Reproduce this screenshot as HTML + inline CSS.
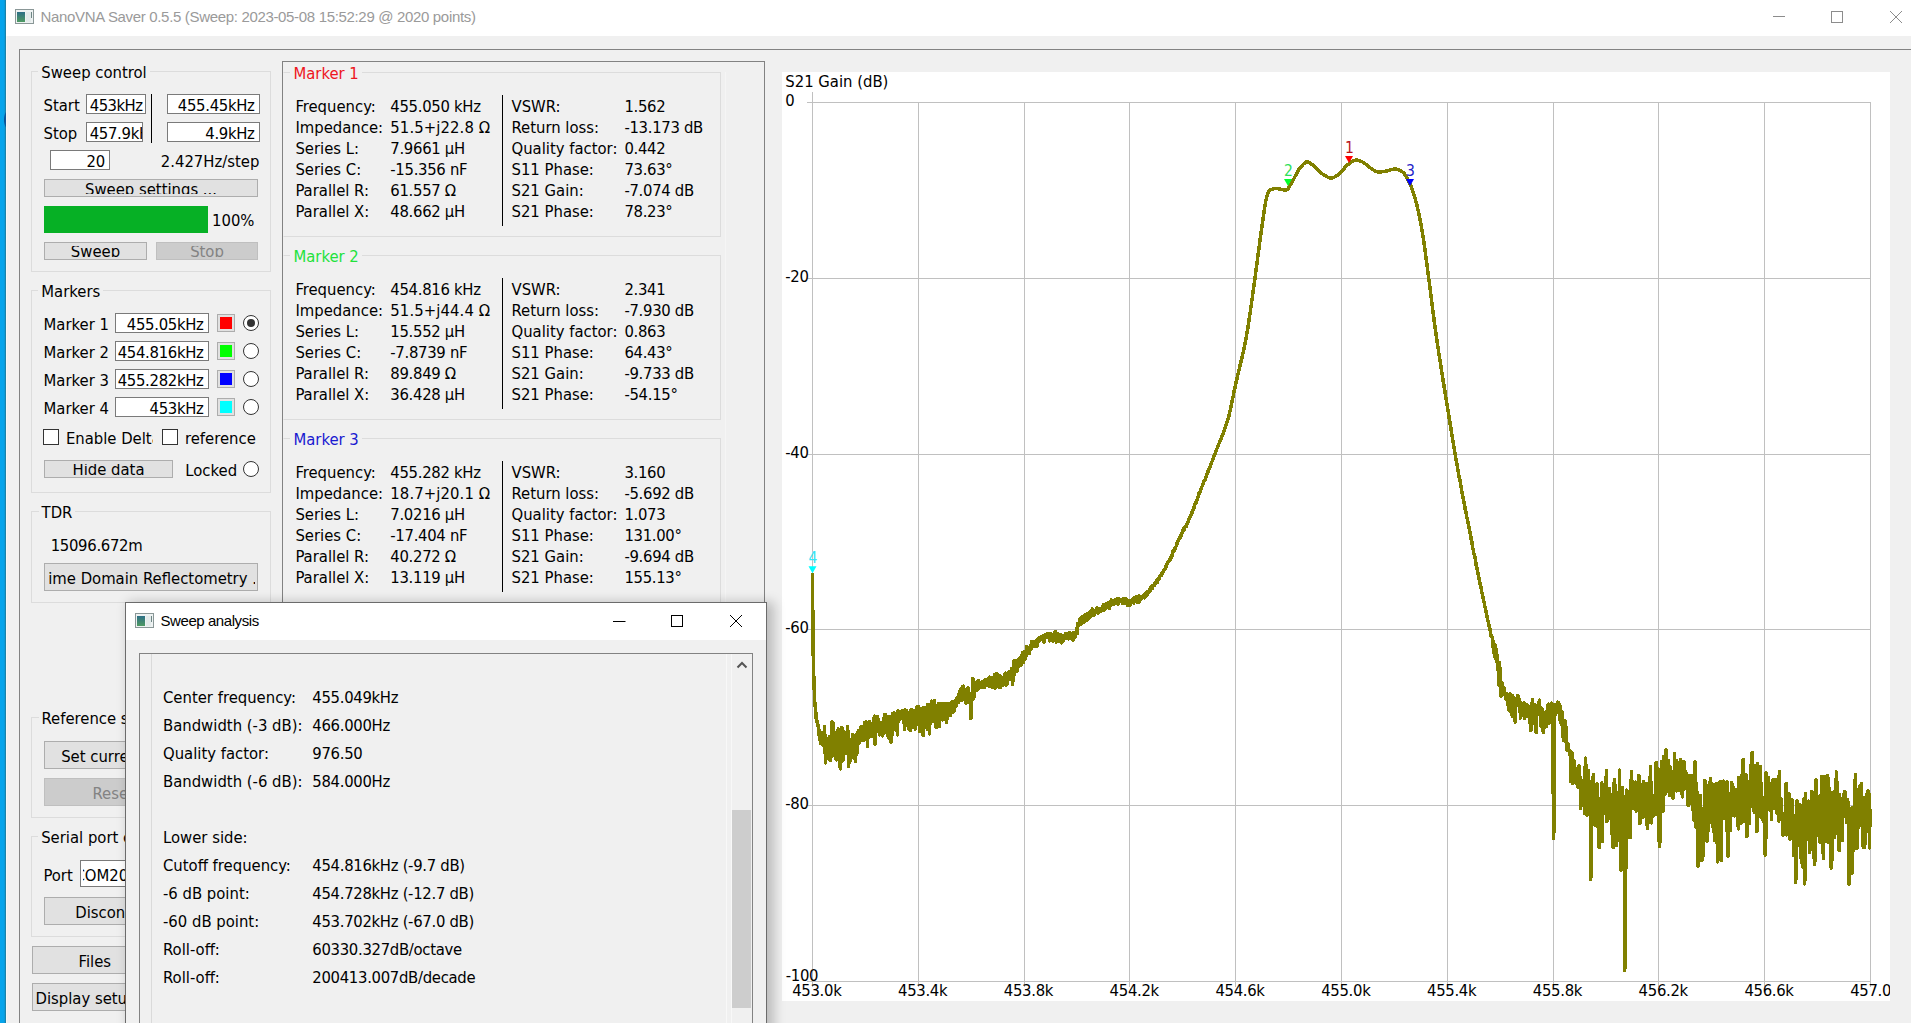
<!DOCTYPE html>
<html lang="en">
<head>
<meta charset="utf-8">
<title>NanoVNA Saver 0.5.5</title>
<style>
html,body{margin:0;padding:0;}
body{width:1911px;height:1023px;overflow:hidden;position:relative;background:#f0f0f0;
 font-family:"DejaVu Sans Condensed","DejaVu Sans","Liberation Sans",sans-serif;font-size:16.5px;font-stretch:condensed;color:#000;}
div{position:absolute;box-sizing:border-box;}
.t{white-space:nowrap;line-height:20px;height:20px;}
.n{letter-spacing:-0.3px;}
.w{letter-spacing:0.1px;}
.seg{font-family:"Liberation Sans",sans-serif;letter-spacing:-0.33px;}
.grp{border:1px solid #dcdcdc;}
.gt{background:#f0f0f0;padding:0 3px;}
.inp{background:#fff;border:1px solid #7a7a7a;overflow:hidden;}
.btn{background:#e1e1e1;border:1px solid #adadad;overflow:hidden;}
.btn.dis{background:#cccccc;border-color:#bfbfbf;color:#838383;}
.btn .t{left:0;right:0;text-align:center;}
.clip{left:0;right:0;top:3px;bottom:2px;overflow:hidden;}
.rad{width:16px;height:16px;border-radius:50%;border:1px solid #333;background:#fff;}
.rad.on:after{content:"";position:absolute;left:3px;top:3px;width:8px;height:8px;border-radius:50%;background:#333;}
.chk{width:16px;height:16px;border:1px solid #333;background:#fff;}
.cb{background:#e1e1e1;border:1px solid #adadad;}
.cb div{left:2px;top:2px;width:12px;height:12px;}
.vl{width:1px;background:#000;}
svg{position:absolute;overflow:visible;}
</style>
</head>
<body>
<div class="" style="left:0px;top:0px;width:6px;height:1023px;background:linear-gradient(90deg,#05a4ec 0,#05a4ec 55%,#0c98d6 80%,#1a82a8 92%,#1a82a8 100%);"></div>
<div class="" style="left:6px;top:0px;width:1px;height:1023px;background:#f3f8fa;"></div>
<svg style="left:0;top:108px" width="7" height="24" viewBox="0 0 7 24"><path d="M5.9 4C3.4 8.5 3.4 15 5.9 19.5Z" fill="#0a4f94"/></svg>
<div class="" style="left:6px;top:0px;width:1905px;height:36px;background:#fff;"></div>
<svg style="left:15px;top:9px" width="19" height="15" viewBox="0 0 19 15"><defs><linearGradient id="ig15" x1="0" y1="0" x2="0" y2="1"><stop offset="0" stop-color="#2d6f86"/><stop offset="1" stop-color="#4f9a62"/></linearGradient></defs><rect x="0.5" y="0.5" width="18" height="14" fill="#eef2f2" stroke="#8a9797"/><rect x="2" y="3" width="8" height="10" fill="url(#ig15)"/><rect x="11" y="3" width="5" height="10" fill="#e3eaea"/><rect x="16" y="3" width="1" height="6" fill="#6d8584"/></svg>
<div class="t seg" style="left:40.5px;top:7.3px;font-size:15.0px;color:#9a9a9a;">NanoVNA Saver 0.5.5 (Sweep: 2023-05-08 15:52:29 @ 2020 points)</div>
<svg style="left:1760px;top:0" width="151" height="36" viewBox="0 0 151 36" fill="none" stroke="#8c8c8c" stroke-width="1"><path d="M13 16.5H25"/><rect x="71.5" y="11.5" width="11" height="11"/><path d="M130 11L142 23M142 11L130 23"/></svg>
<div class="" style="left:19px;top:49px;width:1900px;height:990px;border-left:1px solid #828282;border-top:1px solid #828282;"></div>
<div class="grp" style="left:31px;top:71px;width:240px;height:201px;"></div>
<div class="t gt" style="left:38.3px;top:63.1px;">Sweep control</div>
<div class="t" style="left:43.5px;top:95.6px;">Start</div>
<div class="inp" style="left:86px;top:94px;width:60px;height:20px;"><div class="t n" style="left:2.7px;top:0.6px;letter-spacing:-0.5px;">453kHz</div>
</div>
<div class="vl" style="left:151px;top:94px;width:1px;height:49px;"></div>
<div class="inp" style="left:167px;top:94px;width:93px;height:20px;"><div class="t n" style="right:4.4px;top:0.6px">455.45kHz</div></div>
<div class="t" style="left:43.5px;top:123.9px;">Stop</div>
<div class="inp" style="left:86px;top:122px;width:57px;height:20px;"><div class="t n" style="left:2.7px;top:0.9px;width:52.3px;overflow:hidden;">457.9kHz</div>
</div>
<div class="inp" style="left:167px;top:122px;width:93px;height:20px;"><div class="t n" style="right:4.4px;top:0.9px">4.9kHz</div></div>
<div class="inp" style="left:50px;top:150px;width:60px;height:20px;"><div class="t n" style="right:4.2px;top:0.8px">20</div></div>
<div class="t" style="left:160.8px;top:151.8px;">2.427Hz/step</div>
<div class="btn" style="left:44px;top:179px;width:214px;height:18px;"><div class="clip"><div class="t" style="top:-3.4px">Sweep settings ...</div></div></div>
<div class="" style="left:44px;top:206px;width:164px;height:27px;background:#06b025;"></div>
<div class="t" style="left:212.0px;top:210.9px;">100%</div>
<div class="btn" style="left:44px;top:242px;width:103px;height:18px;"><div class="clip"><div class="t" style="top:-3.6px">Sweep</div></div></div>
<div class="btn dis" style="left:156px;top:242px;width:102px;height:18px;"><div class="clip"><div class="t" style="top:-3.6px">Stop</div></div></div>
<div class="grp" style="left:31px;top:290px;width:240px;height:203px;"></div>
<div class="t gt" style="left:38.3px;top:282.1px;">Markers</div>
<div class="t" style="left:43.5px;top:315.0px;">Marker 1</div>
<div class="inp" style="left:115px;top:313px;width:94px;height:20px;"><div class="t n" style="right:4.4px;top:1.0px">455.05kHz</div></div>
<div class="cb" style="left:217px;top:314px;width:18px;height:18px;"><div style="background:#ff0000"></div></div>
<div class="rad on" style="left:243px;top:315px"></div>
<div class="t" style="left:43.5px;top:343.0px;">Marker 2</div>
<div class="inp" style="left:115px;top:341px;width:94px;height:20px;"><div class="t n" style="right:4.4px;top:1.0px">454.816kHz</div></div>
<div class="cb" style="left:217px;top:342px;width:18px;height:18px;"><div style="background:#00ff00"></div></div>
<div class="rad" style="left:243px;top:343px"></div>
<div class="t" style="left:43.5px;top:371.0px;">Marker 3</div>
<div class="inp" style="left:115px;top:369px;width:94px;height:20px;"><div class="t n" style="right:4.4px;top:1.0px">455.282kHz</div></div>
<div class="cb" style="left:217px;top:370px;width:18px;height:18px;"><div style="background:#0000ff"></div></div>
<div class="rad" style="left:243px;top:371px"></div>
<div class="t" style="left:43.5px;top:399.0px;">Marker 4</div>
<div class="inp" style="left:115px;top:397px;width:94px;height:20px;"><div class="t n" style="right:4.4px;top:1.0px">453kHz</div></div>
<div class="cb" style="left:217px;top:398px;width:18px;height:18px;"><div style="background:#00ffff"></div></div>
<div class="rad" style="left:243px;top:399px"></div>
<div class="chk" style="left:43px;top:429px"></div>
<div class="t" style="left:65.9px;top:428.6px;width:87.5px;overflow:hidden;">Enable Delta</div>
<div class="chk" style="left:162px;top:429px"></div>
<div class="t" style="left:185.0px;top:428.6px;">reference</div>
<div class="btn" style="left:44px;top:460px;width:129px;height:18px;"><div class="clip"><div class="t" style="top:-3.8px">Hide data</div></div></div>
<div class="t" style="left:185.3px;top:460.9px;">Locked</div>
<div class="rad" style="left:243px;top:461px"></div>
<div class="grp" style="left:31px;top:511px;width:240px;height:92px;"></div>
<div class="t gt" style="left:38.6px;top:503.0px;">TDR</div>
<div class="t n" style="left:50.7px;top:536.2px;">15096.672m</div>
<div class="btn" style="left:44px;top:563px;width:214px;height:28px;"><div style="left:3.5px;right:2px;top:0;bottom:0;overflow:hidden;"><div class="t" style="left:-40px;right:-42.5px;top:4.9px">Time Domain Reflectometry ...</div></div></div>
<div class="grp" style="left:31px;top:717px;width:240px;height:101px;"></div>
<div class="t gt" style="left:38.5px;top:708.9px;">Reference sweep</div>
<div class="btn" style="left:44px;top:741px;width:214px;height:28px;"><div class="t" style="top:5.0px">Set current as reference</div></div>
<div class="btn dis" style="left:44px;top:778px;width:214px;height:28px;"><div class="t" style="top:4.7px">Reset reference</div></div>
<div class="grp" style="left:31px;top:836px;width:240px;height:101px;"></div>
<div class="t gt" style="left:38.2px;top:828.1px;">Serial port control</div>
<div class="t" style="left:43.4px;top:866.0px;">Port</div>
<div class="inp" style="left:80px;top:860px;width:120px;height:27px;"><div style="left:1.5px;top:0;right:0;bottom:0;overflow:hidden;"><div class="t" style="left:-8.0px;top:5.0px;">COM20 (H4)</div>
</div></div>
<div class="btn" style="left:44px;top:897px;width:145px;height:28px;"><div class="t" style="top:5.2px">Disconnect</div></div>
<div class="btn" style="left:32px;top:946px;width:145px;height:28px;"><div class="t" style="left:45.6px;top:4.9px;right:auto;text-align:left;">Files</div>
</div>
<div class="btn" style="left:32px;top:983px;width:145px;height:28px;"><div class="t" style="left:2.5px;top:5.0px;right:auto;text-align:left;">Display setup ...</div>
</div>
<div class="" style="left:282px;top:61px;width:483px;height:560px;border:1px solid #828282;"></div>
<div class="" style="left:725px;top:72px;width:1px;height:535px;background:#f5f5f5;"></div>
<div class="grp" style="left:283px;top:72px;width:438px;height:165px;border-left-color:transparent;"></div>
<div class="t gt" style="left:290.4px;top:63.9px;color:#ee1622;">Marker 1</div>
<div class="vl" style="left:502px;top:95px;width:1px;height:131px;"></div>
<div class="t" style="left:295.4px;top:96.9px;">Frequency:</div>
<div class="t n" style="left:390.3px;top:96.9px;">455.050 kHz</div>
<div class="t" style="left:511.5px;top:96.9px;">VSWR:</div>
<div class="t n" style="left:624.4px;top:96.9px;">1.562</div>
<div class="t" style="left:295.4px;top:117.9px;">Impedance:</div>
<div class="t w" style="left:390.3px;top:117.9px;">51.5+j22.8 Ω</div>
<div class="t" style="left:511.5px;top:117.9px;">Return loss:</div>
<div class="t n" style="left:624.4px;top:117.9px;">-13.173 dB</div>
<div class="t" style="left:295.4px;top:139.0px;">Series L:</div>
<div class="t n" style="left:390.3px;top:139.0px;">7.9661 µH</div>
<div class="t" style="left:511.5px;top:139.0px;">Quality factor:</div>
<div class="t n" style="left:624.4px;top:139.0px;">0.442</div>
<div class="t" style="left:295.4px;top:160.0px;">Series C:</div>
<div class="t n" style="left:390.3px;top:160.0px;">-15.356 nF</div>
<div class="t" style="left:511.5px;top:160.0px;">S11 Phase:</div>
<div class="t n" style="left:624.4px;top:160.0px;">73.63°</div>
<div class="t" style="left:295.4px;top:181.1px;">Parallel R:</div>
<div class="t n" style="left:390.3px;top:181.1px;">61.557 Ω</div>
<div class="t" style="left:511.5px;top:181.1px;">S21 Gain:</div>
<div class="t n" style="left:624.4px;top:181.1px;">-7.074 dB</div>
<div class="t" style="left:295.4px;top:202.1px;">Parallel X:</div>
<div class="t n" style="left:390.3px;top:202.1px;">48.662 µH</div>
<div class="t" style="left:511.5px;top:202.1px;">S21 Phase:</div>
<div class="t n" style="left:624.4px;top:202.1px;">78.23°</div>
<div class="grp" style="left:283px;top:255px;width:438px;height:165px;border-left-color:transparent;"></div>
<div class="t gt" style="left:290.4px;top:246.9px;color:#22e23c;">Marker 2</div>
<div class="vl" style="left:502px;top:278px;width:1px;height:131px;"></div>
<div class="t" style="left:295.4px;top:279.9px;">Frequency:</div>
<div class="t n" style="left:390.3px;top:279.9px;">454.816 kHz</div>
<div class="t" style="left:511.5px;top:279.9px;">VSWR:</div>
<div class="t n" style="left:624.4px;top:279.9px;">2.341</div>
<div class="t" style="left:295.4px;top:300.9px;">Impedance:</div>
<div class="t w" style="left:390.3px;top:300.9px;">51.5+j44.4 Ω</div>
<div class="t" style="left:511.5px;top:300.9px;">Return loss:</div>
<div class="t n" style="left:624.4px;top:300.9px;">-7.930 dB</div>
<div class="t" style="left:295.4px;top:322.0px;">Series L:</div>
<div class="t n" style="left:390.3px;top:322.0px;">15.552 µH</div>
<div class="t" style="left:511.5px;top:322.0px;">Quality factor:</div>
<div class="t n" style="left:624.4px;top:322.0px;">0.863</div>
<div class="t" style="left:295.4px;top:343.0px;">Series C:</div>
<div class="t n" style="left:390.3px;top:343.0px;">-7.8739 nF</div>
<div class="t" style="left:511.5px;top:343.0px;">S11 Phase:</div>
<div class="t n" style="left:624.4px;top:343.0px;">64.43°</div>
<div class="t" style="left:295.4px;top:364.1px;">Parallel R:</div>
<div class="t n" style="left:390.3px;top:364.1px;">89.849 Ω</div>
<div class="t" style="left:511.5px;top:364.1px;">S21 Gain:</div>
<div class="t n" style="left:624.4px;top:364.1px;">-9.733 dB</div>
<div class="t" style="left:295.4px;top:385.1px;">Parallel X:</div>
<div class="t n" style="left:390.3px;top:385.1px;">36.428 µH</div>
<div class="t" style="left:511.5px;top:385.1px;">S21 Phase:</div>
<div class="t n" style="left:624.4px;top:385.1px;">-54.15°</div>
<div class="grp" style="left:283px;top:438px;width:438px;height:165px;border-left-color:transparent;"></div>
<div class="t gt" style="left:290.4px;top:429.9px;color:#1a1ad0;">Marker 3</div>
<div class="vl" style="left:502px;top:461px;width:1px;height:131px;"></div>
<div class="t" style="left:295.4px;top:462.9px;">Frequency:</div>
<div class="t n" style="left:390.3px;top:462.9px;">455.282 kHz</div>
<div class="t" style="left:511.5px;top:462.9px;">VSWR:</div>
<div class="t n" style="left:624.4px;top:462.9px;">3.160</div>
<div class="t" style="left:295.4px;top:483.9px;">Impedance:</div>
<div class="t w" style="left:390.3px;top:483.9px;">18.7+j20.1 Ω</div>
<div class="t" style="left:511.5px;top:483.9px;">Return loss:</div>
<div class="t n" style="left:624.4px;top:483.9px;">-5.692 dB</div>
<div class="t" style="left:295.4px;top:505.0px;">Series L:</div>
<div class="t n" style="left:390.3px;top:505.0px;">7.0216 µH</div>
<div class="t" style="left:511.5px;top:505.0px;">Quality factor:</div>
<div class="t n" style="left:624.4px;top:505.0px;">1.073</div>
<div class="t" style="left:295.4px;top:526.0px;">Series C:</div>
<div class="t n" style="left:390.3px;top:526.0px;">-17.404 nF</div>
<div class="t" style="left:511.5px;top:526.0px;">S11 Phase:</div>
<div class="t n" style="left:624.4px;top:526.0px;">131.00°</div>
<div class="t" style="left:295.4px;top:547.1px;">Parallel R:</div>
<div class="t n" style="left:390.3px;top:547.1px;">40.272 Ω</div>
<div class="t" style="left:511.5px;top:547.1px;">S21 Gain:</div>
<div class="t n" style="left:624.4px;top:547.1px;">-9.694 dB</div>
<div class="t" style="left:295.4px;top:568.1px;">Parallel X:</div>
<div class="t n" style="left:390.3px;top:568.1px;">13.119 µH</div>
<div class="t" style="left:511.5px;top:568.1px;">S21 Phase:</div>
<div class="t n" style="left:624.4px;top:568.1px;">155.13°</div>
<div class="" style="left:782px;top:72px;width:1108px;height:929px;background:#fff;overflow:hidden;"></div>
<svg style="left:0;top:0" width="1911" height="1023" viewBox="0 0 1911 1023"><path d="M812.5 92.0V987M918.5 102.4V987M1024.5 102.4V987M1129.5 102.4V987M1235.5 102.4V987M1341.5 102.4V987M1447.5 102.4V987M1553.5 102.4V987M1658.5 102.4V987M1764.5 102.4V987M1870.5 102.4V987M807 102.5H1871M807 278.5H1871M807 454.5H1871M807 629.5H1871M807 805.5H1871M807 981.5H1871" stroke="#c0c0c0" stroke-width="1" fill="none" shape-rendering="crispEdges"/><polyline shape-rendering="crispEdges" fill="none" stroke="#808000" stroke-width="3.5" stroke-linejoin="round" stroke-linecap="round" points="812.5,574.5 813.0,640.8 813.5,669.3 814.1,684.6 814.6,699.9 815.1,706.1 815.6,709.5 816.2,719.1 816.7,720.5 817.2,722.3 817.7,726.0 818.3,725.0 818.8,735.1 819.3,732.9 819.8,730.8 820.4,743.5 820.9,738.0 821.4,732.6 821.9,736.1 822.5,744.1 823.0,733.9 823.5,740.5 824.0,746.2 824.6,726.9 825.1,749.2 825.6,762.9 826.1,751.7 826.6,756.3 827.2,751.9 827.7,749.4 828.2,758.9 828.7,747.9 829.3,736.4 829.8,755.0 830.3,760.7 830.8,744.7 831.4,733.2 831.9,721.9 832.4,756.1 832.9,737.2 833.5,723.6 834.0,746.1 834.5,755.5 835.0,735.3 835.6,738.1 836.1,759.9 836.6,732.6 837.1,734.5 837.7,746.2 838.2,728.9 838.7,739.1 839.2,758.6 839.7,743.8 840.3,769.0 840.8,752.3 841.3,752.8 841.8,727.2 842.4,760.8 842.9,734.5 843.4,759.8 843.9,733.5 844.5,732.2 845.0,746.9 845.5,737.6 846.0,740.4 846.6,753.3 847.1,742.8 847.6,726.5 848.1,737.4 848.7,766.5 849.2,744.1 849.7,762.8 850.2,757.4 850.8,748.8 851.3,739.2 851.8,751.1 852.3,751.3 852.8,734.8 853.4,758.0 853.9,752.1 854.4,750.0 854.9,742.8 855.5,761.4 856.0,734.6 856.5,754.6 857.0,752.5 857.6,751.6 858.1,731.6 858.6,730.7 859.1,739.3 859.7,743.0 860.2,737.8 860.7,727.2 861.2,740.7 861.8,737.3 862.3,726.7 862.8,728.6 863.3,740.5 863.9,728.6 864.4,734.6 864.9,722.4 865.4,737.8 866.0,722.0 866.5,739.3 867.0,725.4 867.5,746.3 868.0,731.4 868.6,737.8 869.1,736.2 869.6,721.6 870.1,723.1 870.7,729.2 871.2,725.3 871.7,736.5 872.2,725.8 872.8,736.2 873.3,736.4 873.8,726.9 874.3,716.2 874.9,744.2 875.4,718.5 875.9,730.9 876.4,721.3 877.0,726.5 877.5,716.3 878.0,719.0 878.5,731.4 879.1,725.9 879.6,734.9 880.1,726.9 880.6,724.4 881.1,722.9 881.7,723.6 882.2,729.4 882.7,736.0 883.2,725.8 883.8,733.4 884.3,715.5 884.8,714.5 885.3,714.5 885.9,732.2 886.4,716.2 886.9,729.0 887.4,735.3 888.0,717.7 888.5,722.2 889.0,738.7 889.5,716.5 890.1,725.2 890.6,717.0 891.1,742.2 891.6,739.6 892.2,726.5 892.7,713.6 893.2,729.8 893.7,714.0 894.2,712.7 894.8,716.8 895.3,719.7 895.8,728.1 896.3,713.9 896.9,721.8 897.4,734.9 897.9,710.9 898.4,721.9 899.0,712.0 899.5,711.6 900.0,717.5 900.5,718.8 901.1,714.0 901.6,718.2 902.1,711.6 902.6,710.7 903.2,714.6 903.7,722.8 904.2,717.9 904.7,729.3 905.3,709.9 905.8,719.0 906.3,717.6 906.8,710.9 907.3,716.8 907.9,725.3 908.4,718.3 908.9,729.0 909.4,725.6 910.0,721.3 910.5,730.6 911.0,709.7 911.5,713.1 912.1,709.8 912.6,727.0 913.1,713.3 913.6,713.4 914.2,710.5 914.7,712.5 915.2,729.2 915.7,711.8 916.3,713.1 916.8,707.1 917.3,716.5 917.8,710.3 918.4,706.6 918.9,707.9 919.4,731.6 919.9,710.4 920.4,717.1 921.0,720.2 921.5,725.9 922.0,712.0 922.5,708.0 923.1,735.6 923.6,725.9 924.1,721.7 924.6,707.9 925.2,716.0 925.7,723.4 926.2,717.9 926.7,720.3 927.3,729.0 927.8,704.6 928.3,717.2 928.8,718.8 929.4,733.8 929.9,721.6 930.4,716.6 930.9,707.0 931.5,701.1 932.0,721.0 932.5,721.2 933.0,715.6 933.5,715.3 934.1,721.7 934.6,700.8 935.1,710.6 935.6,711.2 936.2,727.7 936.7,718.1 937.2,717.8 937.7,714.0 938.3,703.4 938.8,706.9 939.3,726.4 939.8,718.9 940.4,710.6 940.9,705.5 941.4,705.1 941.9,703.5 942.5,719.8 943.0,716.4 943.5,717.4 944.0,703.6 944.6,718.9 945.1,707.8 945.6,703.7 946.1,704.1 946.6,722.3 947.2,713.4 947.7,715.0 948.2,714.2 948.7,703.8 949.3,715.6 949.8,703.7 950.3,715.3 950.8,711.7 951.4,713.2 951.9,702.5 952.4,701.6 952.9,712.6 953.5,710.2 954.0,711.4 954.5,706.4 955.0,701.0 955.6,705.0 956.1,706.0 956.6,698.1 957.1,697.5 957.7,698.6 958.2,702.5 958.7,694.9 959.2,694.1 959.8,694.0 960.3,689.6 960.8,699.5 961.3,688.4 961.8,700.8 962.4,687.1 962.9,686.3 963.4,686.2 963.9,688.5 964.5,699.4 965.0,690.9 965.5,692.8 966.0,703.5 966.6,701.4 967.1,692.3 967.6,699.5 968.1,688.0 968.7,690.3 969.2,701.7 969.7,702.9 970.2,696.6 970.8,718.2 971.3,715.8 971.8,700.0 972.3,698.0 972.9,678.2 973.4,690.8 973.9,698.0 974.4,692.3 974.9,688.8 975.5,682.9 976.0,685.1 976.5,690.6 977.0,683.6 977.6,689.7 978.1,680.4 978.6,688.3 979.1,684.0 979.7,682.1 980.2,686.0 980.7,687.5 981.2,685.5 981.8,683.4 982.3,686.8 982.8,681.7 983.3,685.8 983.9,682.3 984.4,687.4 984.9,679.9 985.4,682.4 986.0,680.2 986.5,684.8 987.0,679.3 987.5,679.9 988.0,678.7 988.6,684.0 989.1,686.0 989.6,677.0 990.1,679.1 990.7,685.5 991.2,678.1 991.7,685.5 992.2,687.3 992.8,684.1 993.3,681.8 993.8,684.6 994.3,675.0 994.9,688.4 995.4,677.4 995.9,676.9 996.4,673.6 997.0,677.2 997.5,674.8 998.0,675.8 998.5,683.3 999.1,687.5 999.6,677.8 1000.1,675.9 1000.6,687.2 1001.1,683.3 1001.7,685.8 1002.2,684.7 1002.7,682.5 1003.2,677.9 1003.8,685.0 1004.3,676.4 1004.8,676.6 1005.3,673.2 1005.9,683.5 1006.4,685.2 1006.9,677.0 1007.4,683.2 1008.0,673.5 1008.5,676.2 1009.0,671.9 1009.5,679.0 1010.1,679.2 1010.6,672.5 1011.1,672.6 1011.6,668.6 1012.2,677.8 1012.7,684.2 1013.2,670.4 1013.7,678.1 1014.2,660.6 1014.8,670.2 1015.3,668.5 1015.8,667.2 1016.3,669.9 1016.9,671.4 1017.4,660.8 1017.9,662.0 1018.4,662.1 1019.0,659.1 1019.5,658.8 1020.0,665.9 1020.5,657.9 1021.1,665.3 1021.6,655.3 1022.1,659.5 1022.6,652.9 1023.2,660.0 1023.7,662.4 1024.2,651.4 1024.7,659.6 1025.3,658.3 1025.8,656.9 1026.3,650.3 1026.8,646.7 1027.3,652.3 1027.9,649.4 1028.4,647.5 1028.9,650.1 1029.4,653.6 1030.0,649.4 1030.5,645.9 1031.0,648.9 1031.5,641.7 1032.1,645.7 1032.6,642.3 1033.1,645.3 1033.6,642.2 1034.2,646.0 1034.7,643.2 1035.2,642.0 1035.7,645.3 1036.3,640.2 1036.8,646.4 1037.3,640.8 1037.8,640.4 1038.4,640.4 1038.9,637.7 1039.4,640.8 1039.9,637.4 1040.4,638.6 1041.0,637.1 1041.5,638.8 1042.0,636.2 1042.5,639.9 1043.1,636.0 1043.6,640.2 1044.1,642.1 1044.6,636.1 1045.2,637.2 1045.7,634.3 1046.2,634.3 1046.7,637.7 1047.3,633.5 1047.8,634.8 1048.3,634.7 1048.8,634.0 1049.4,640.1 1049.9,640.8 1050.4,633.5 1050.9,636.2 1051.5,634.7 1052.0,636.6 1052.5,637.2 1053.0,641.2 1053.6,636.2 1054.1,638.3 1054.6,636.1 1055.1,631.4 1055.6,632.2 1056.2,642.1 1056.7,633.9 1057.2,639.0 1057.7,633.9 1058.3,636.1 1058.8,634.5 1059.3,641.3 1059.8,639.9 1060.4,641.4 1060.9,641.3 1061.4,634.9 1061.9,642.9 1062.5,639.9 1063.0,641.3 1063.5,640.6 1064.0,637.7 1064.6,635.2 1065.1,637.4 1065.6,633.7 1066.1,634.3 1066.7,638.2 1067.2,634.0 1067.7,633.4 1068.2,637.2 1068.7,639.0 1069.3,636.3 1069.8,632.6 1070.3,636.3 1070.8,637.5 1071.4,638.9 1071.9,633.6 1072.4,634.0 1072.9,640.3 1073.5,632.3 1074.0,637.7 1074.5,634.9 1075.0,637.7 1075.6,634.1 1076.1,632.9 1076.6,628.8 1077.1,633.8 1077.7,623.3 1078.2,624.6 1078.7,625.9 1079.2,624.7 1079.8,619.3 1080.3,619.2 1080.8,617.8 1081.3,623.8 1081.8,619.5 1082.4,616.4 1082.9,620.1 1083.4,620.4 1083.9,622.6 1084.5,616.7 1085.0,615.1 1085.5,617.2 1086.0,614.5 1086.6,614.0 1087.1,620.5 1087.6,614.5 1088.1,616.3 1088.7,618.3 1089.2,614.3 1089.7,612.4 1090.2,617.1 1090.8,611.6 1091.3,616.1 1091.8,615.7 1092.3,609.0 1092.9,610.5 1093.4,614.7 1093.9,615.1 1094.4,610.8 1094.9,611.6 1095.5,611.8 1096.0,612.3 1096.5,609.3 1097.0,608.0 1097.6,608.8 1098.1,612.9 1098.6,608.7 1099.1,608.4 1099.7,611.6 1100.2,610.0 1100.7,611.5 1101.2,610.3 1101.8,610.2 1102.3,609.1 1102.8,606.4 1103.3,604.6 1103.9,610.1 1104.4,609.2 1104.9,609.4 1105.4,607.3 1106.0,607.0 1106.5,603.6 1107.0,604.7 1107.5,606.9 1108.0,602.8 1108.6,606.9 1109.1,602.5 1109.6,608.2 1110.1,605.5 1110.7,605.2 1111.2,599.8 1111.7,604.3 1112.2,601.9 1112.8,600.5 1113.3,601.2 1113.8,601.4 1114.3,604.0 1114.9,603.2 1115.4,599.3 1115.9,600.8 1116.4,600.4 1117.0,601.3 1117.5,598.7 1118.0,604.3 1118.5,602.8 1119.1,598.9 1119.6,601.3 1120.1,599.7 1120.6,600.6 1121.1,600.1 1121.7,600.3 1122.2,603.0 1122.7,599.3 1123.2,599.1 1123.8,603.2 1124.3,602.8 1124.8,601.2 1125.3,598.4 1125.9,598.8 1126.4,600.3 1126.9,602.1 1127.4,605.4 1128.0,601.8 1128.5,604.4 1129.0,603.5 1129.5,600.8 1130.1,605.1 1130.6,603.9 1131.1,601.1 1131.6,602.0 1132.2,600.8 1132.7,599.0 1133.2,599.2 1133.7,603.1 1134.2,597.9 1134.8,598.8 1135.3,597.6 1135.8,597.6 1136.3,596.3 1136.9,596.7 1137.4,602.2 1137.9,600.2 1138.4,596.7 1139.0,596.1 1139.5,601.8 1140.0,599.5 1140.5,597.6 1141.1,597.1 1141.6,597.7 1142.1,598.2 1142.6,596.3 1143.2,597.7 1143.7,595.0 1144.2,597.8 1144.7,596.7 1145.3,596.3 1145.8,595.1 1146.3,592.2 1146.8,595.2 1147.3,593.8 1147.9,592.3 1148.4,592.4 1148.9,591.9 1149.4,589.5 1150.0,591.0 1150.5,589.2 1151.0,587.1 1151.5,586.8 1152.1,588.8 1152.6,585.3 1153.1,586.0 1153.6,585.2 1154.2,585.6 1154.7,583.6 1155.2,582.3 1155.7,582.2 1156.3,580.8 1156.8,582.9 1157.3,582.3 1157.8,579.5 1158.4,578.7 1158.9,577.7 1159.4,578.9 1159.9,576.1 1160.5,575.9 1161.0,574.5 1161.5,575.2 1162.0,573.5 1162.5,572.1 1163.1,571.5 1163.6,571.7 1164.1,569.9 1164.6,569.2 1165.2,569.0 1165.7,568.1 1166.2,565.9 1166.7,565.0 1167.3,563.2 1167.8,562.7 1168.3,561.7 1168.8,561.0 1169.4,560.6 1169.9,560.3 1170.4,557.1 1170.9,558.2 1171.5,555.1 1172.0,556.3 1172.5,555.1 1173.0,551.0 1173.6,551.0 1174.1,550.2 1174.6,550.5 1175.1,547.4 1175.6,547.2 1176.2,546.1 1176.7,545.2 1177.2,542.5 1177.7,542.0 1178.3,540.6 1178.8,539.7 1179.3,537.8 1179.8,538.8 1180.4,535.4 1180.9,535.0 1181.4,535.7 1181.9,532.9 1182.5,532.3 1183.0,530.6 1183.5,528.8 1184.0,530.4 1184.6,528.3 1185.1,526.6 1185.6,526.0 1186.1,526.5 1186.7,524.2 1187.2,523.7 1187.7,521.8 1188.2,521.4 1188.7,519.6 1189.3,518.7 1189.8,517.1 1190.3,516.1 1190.8,514.7 1191.4,514.7 1191.9,513.1 1192.4,510.9 1192.9,510.1 1193.5,509.9 1194.0,507.9 1194.5,505.2 1195.0,503.9 1195.6,503.9 1196.1,502.1 1196.6,501.1 1197.1,499.3 1197.7,498.1 1198.2,496.7 1198.7,495.4 1199.2,492.9 1199.8,491.9 1200.3,491.8 1200.8,489.7 1201.3,488.9 1201.8,486.9 1202.4,485.8 1202.9,484.5 1203.4,484.1 1203.9,481.3 1204.5,480.7 1205.0,480.0 1205.5,478.0 1206.0,477.1 1206.6,474.7 1207.1,473.6 1207.6,473.3 1208.1,470.9 1208.7,469.5 1209.2,469.3 1209.7,467.0 1210.2,466.6 1210.8,464.7 1211.3,462.7 1211.8,462.0 1212.3,460.9 1212.9,459.5 1213.4,458.3 1213.9,456.0 1214.4,455.2 1214.9,454.0 1215.5,452.1 1216.0,451.0 1216.5,449.7 1217.0,448.5 1217.6,447.1 1218.1,445.6 1218.6,444.6 1219.1,443.3 1219.7,442.3 1220.2,440.7 1220.7,439.3 1221.2,438.3 1221.8,436.8 1222.3,435.5 1222.8,434.1 1223.3,432.8 1223.9,431.5 1224.4,429.9 1224.9,428.5 1225.4,427.1 1226.0,425.5 1226.5,424.0 1227.0,422.3 1227.5,420.6 1228.0,418.8 1228.6,416.9 1229.1,414.9 1229.6,412.8 1230.1,410.5 1230.7,408.2 1231.2,405.7 1231.7,403.2 1232.2,400.7 1232.8,398.1 1233.3,395.5 1233.8,393.0 1234.3,390.4 1234.9,387.9 1235.4,385.4 1235.9,383.0 1236.4,380.7 1237.0,378.4 1237.5,376.2 1238.0,374.0 1238.5,371.8 1239.1,369.6 1239.6,367.5 1240.1,365.3 1240.6,363.2 1241.1,361.0 1241.7,358.8 1242.2,356.6 1242.7,354.3 1243.2,352.0 1243.8,349.6 1244.3,347.1 1244.8,344.6 1245.3,341.9 1245.9,339.2 1246.4,336.4 1246.9,333.4 1247.4,330.3 1248.0,327.1 1248.5,323.8 1249.0,320.3 1249.5,316.8 1250.1,313.3 1250.6,309.6 1251.1,305.9 1251.6,302.2 1252.2,298.4 1252.7,294.7 1253.2,290.9 1253.7,287.1 1254.3,283.3 1254.8,279.6 1255.3,275.9 1255.8,272.0 1256.3,268.1 1256.9,264.2 1257.4,260.1 1257.9,256.1 1258.4,252.0 1259.0,248.0 1259.5,244.0 1260.0,240.0 1260.5,236.2 1261.1,232.4 1261.6,228.8 1262.1,225.3 1262.6,221.7 1263.2,218.0 1263.7,214.3 1264.2,210.6 1264.7,207.2 1265.3,203.9 1265.8,201.0 1266.3,198.5 1266.8,196.5 1267.4,195.0 1267.9,193.6 1268.4,192.3 1268.9,191.3 1269.4,190.5 1270.0,190.0 1270.5,189.8 1271.0,189.5 1271.5,189.3 1272.1,189.2 1272.6,189.0 1273.1,188.9 1273.6,188.7 1274.2,188.6 1274.7,188.6 1275.2,188.5 1275.7,188.5 1276.3,188.5 1276.8,188.5 1277.3,188.6 1277.8,188.6 1278.4,188.7 1278.9,188.8 1279.4,188.9 1279.9,189.0 1280.5,189.1 1281.0,189.2 1281.5,189.4 1282.0,189.5 1282.5,189.6 1283.1,189.7 1283.6,189.8 1284.1,189.9 1284.6,189.9 1285.2,190.0 1285.7,190.0 1286.2,190.0 1286.7,189.8 1287.3,189.4 1287.8,188.9 1288.3,188.2 1288.8,187.4 1289.4,186.5 1289.9,185.6 1290.4,184.7 1290.9,183.8 1291.5,182.9 1292.0,182.0 1292.5,181.2 1293.0,180.3 1293.6,179.4 1294.1,178.4 1294.6,177.4 1295.1,176.4 1295.6,175.3 1296.2,174.3 1296.7,173.3 1297.2,172.3 1297.7,171.4 1298.3,170.5 1298.8,169.6 1299.3,168.9 1299.8,168.2 1300.4,167.6 1300.9,167.0 1301.4,166.3 1301.9,165.7 1302.5,165.1 1303.0,164.5 1303.5,164.0 1304.0,163.5 1304.6,163.0 1305.1,162.7 1305.6,162.4 1306.1,162.1 1306.7,162.0 1307.2,162.0 1307.7,162.1 1308.2,162.2 1308.7,162.4 1309.3,162.6 1309.8,162.9 1310.3,163.3 1310.8,163.6 1311.4,164.0 1311.9,164.4 1312.4,164.8 1312.9,165.2 1313.5,165.6 1314.0,166.0 1314.5,166.4 1315.0,166.8 1315.6,167.2 1316.1,167.7 1316.6,168.2 1317.1,168.7 1317.7,169.3 1318.2,169.8 1318.7,170.3 1319.2,170.9 1319.8,171.4 1320.3,172.0 1320.8,172.5 1321.3,173.0 1321.8,173.4 1322.4,173.9 1322.9,174.3 1323.4,174.6 1323.9,175.0 1324.5,175.3 1325.0,175.6 1325.5,175.9 1326.0,176.2 1326.6,176.5 1327.1,176.8 1327.6,177.1 1328.1,177.3 1328.7,177.5 1329.2,177.7 1329.7,177.8 1330.2,177.9 1330.8,178.0 1331.3,178.0 1331.8,177.9 1332.3,177.8 1332.9,177.7 1333.4,177.5 1333.9,177.3 1334.4,177.1 1334.9,176.8 1335.5,176.5 1336.0,176.2 1336.5,175.9 1337.0,175.6 1337.6,175.3 1338.1,174.9 1338.6,174.6 1339.1,174.2 1339.7,173.7 1340.2,173.2 1340.7,172.6 1341.2,172.1 1341.8,171.4 1342.3,170.8 1342.8,170.1 1343.3,169.5 1343.9,168.8 1344.4,168.2 1344.9,167.5 1345.4,166.9 1346.0,166.3 1346.5,165.8 1347.0,165.2 1347.5,164.8 1348.1,164.3 1348.6,164.0 1349.1,163.6 1349.6,163.2 1350.1,162.9 1350.7,162.5 1351.2,162.2 1351.7,161.8 1352.2,161.5 1352.8,161.2 1353.3,160.9 1353.8,160.7 1354.3,160.4 1354.9,160.3 1355.4,160.1 1355.9,160.0 1356.4,160.0 1357.0,160.0 1357.5,160.1 1358.0,160.2 1358.5,160.3 1359.1,160.5 1359.6,160.7 1360.1,160.9 1360.6,161.1 1361.2,161.4 1361.7,161.6 1362.2,161.9 1362.7,162.1 1363.2,162.4 1363.8,162.7 1364.3,163.1 1364.8,163.5 1365.3,163.9 1365.9,164.3 1366.4,164.8 1366.9,165.2 1367.4,165.7 1368.0,166.1 1368.5,166.5 1369.0,167.0 1369.5,167.4 1370.1,167.7 1370.6,168.1 1371.1,168.4 1371.6,168.7 1372.2,169.1 1372.7,169.4 1373.2,169.8 1373.7,170.1 1374.3,170.4 1374.8,170.8 1375.3,171.1 1375.8,171.3 1376.3,171.5 1376.9,171.7 1377.4,171.9 1377.9,172.0 1378.4,172.0 1379.0,172.0 1379.5,172.0 1380.0,171.9 1380.5,171.9 1381.1,171.8 1381.6,171.8 1382.1,171.7 1382.6,171.6 1383.2,171.6 1383.7,171.5 1384.2,171.4 1384.7,171.3 1385.3,171.2 1385.8,171.1 1386.3,171.0 1386.8,170.9 1387.4,170.8 1387.9,170.7 1388.4,170.6 1388.9,170.4 1389.4,170.2 1390.0,170.1 1390.5,169.9 1391.0,169.7 1391.5,169.6 1392.1,169.4 1392.6,169.3 1393.1,169.2 1393.6,169.1 1394.2,169.0 1394.7,169.0 1395.2,169.0 1395.7,169.0 1396.3,169.1 1396.8,169.2 1397.3,169.4 1397.8,169.5 1398.4,169.7 1398.9,169.9 1399.4,170.2 1399.9,170.4 1400.5,170.7 1401.0,171.0 1401.5,171.3 1402.0,171.6 1402.5,172.0 1403.1,172.3 1403.6,172.8 1404.1,173.4 1404.6,174.1 1405.2,174.8 1405.7,175.6 1406.2,176.5 1406.7,177.4 1407.3,178.4 1407.8,179.4 1408.3,180.5 1408.8,181.5 1409.4,182.6 1409.9,183.8 1410.4,184.9 1410.9,186.1 1411.5,187.4 1412.0,188.8 1412.5,190.3 1413.0,191.8 1413.6,193.4 1414.1,195.1 1414.6,196.8 1415.1,198.6 1415.6,200.5 1416.2,202.4 1416.7,204.4 1417.2,206.4 1417.7,208.7 1418.3,211.0 1418.8,213.4 1419.3,216.0 1419.8,218.6 1420.4,221.4 1420.9,224.2 1421.4,227.1 1421.9,230.1 1422.5,233.2 1423.0,236.3 1423.5,239.7 1424.0,243.2 1424.6,246.8 1425.1,250.6 1425.6,254.5 1426.1,258.4 1426.7,262.4 1427.2,266.4 1427.7,270.5 1428.2,274.4 1428.7,278.4 1429.3,282.3 1429.8,286.4 1430.3,290.5 1430.8,294.6 1431.4,298.8 1431.9,302.9 1432.4,307.1 1432.9,311.2 1433.5,315.3 1434.0,319.4 1434.5,323.3 1435.0,327.2 1435.6,330.9 1436.1,334.6 1436.6,338.2 1437.1,341.8 1437.7,345.4 1438.2,348.9 1438.7,352.3 1439.2,355.7 1439.8,359.1 1440.3,362.5 1440.8,365.8 1441.3,369.2 1441.9,372.5 1442.4,375.7 1442.9,379.0 1443.4,382.2 1443.9,385.5 1444.5,388.7 1445.0,392.1 1445.5,395.1 1446.0,398.3 1446.6,401.7 1447.1,405.0 1447.6,408.1 1448.1,411.3 1448.7,414.6 1449.2,418.2 1449.7,421.3 1450.2,424.3 1450.8,427.4 1451.3,430.8 1451.8,434.3 1452.3,437.4 1452.9,440.8 1453.4,444.0 1453.9,446.5 1454.4,449.9 1455.0,453.1 1455.5,456.2 1456.0,459.3 1456.5,461.7 1457.0,464.8 1457.6,468.0 1458.1,470.5 1458.6,473.9 1459.1,477.3 1459.7,479.1 1460.2,481.9 1460.7,485.3 1461.2,487.7 1461.8,491.1 1462.3,494.1 1462.8,496.6 1463.3,499.1 1463.9,502.0 1464.4,504.2 1464.9,507.3 1465.4,510.3 1466.0,512.1 1466.5,514.8 1467.0,518.4 1467.5,520.0 1468.1,523.6 1468.6,525.6 1469.1,528.0 1469.6,530.9 1470.1,532.7 1470.7,535.9 1471.2,539.7 1471.7,541.3 1472.2,544.3 1472.8,547.9 1473.3,550.5 1473.8,553.0 1474.3,555.1 1474.9,557.1 1475.4,559.7 1475.9,562.7 1476.4,566.5 1477.0,568.4 1477.5,571.0 1478.0,573.3 1478.5,575.2 1479.1,578.9 1479.6,581.0 1480.1,583.7 1480.6,585.8 1481.2,588.2 1481.7,591.6 1482.2,593.3 1482.7,596.0 1483.2,598.5 1483.8,601.0 1484.3,603.5 1484.8,606.0 1485.3,608.5 1485.9,611.0 1486.4,613.4 1486.9,615.9 1487.4,618.3 1488.0,620.7 1488.5,623.1 1489.0,625.5 1489.5,627.8 1490.1,629.7 1490.6,633.3 1491.1,636.6 1491.6,635.8 1492.2,637.4 1492.7,639.0 1493.2,647.4 1493.7,642.5 1494.3,654.5 1494.8,644.6 1495.3,659.0 1495.8,648.6 1496.3,657.7 1496.9,662.3 1497.4,655.1 1497.9,670.0 1498.4,663.4 1499.0,685.7 1499.5,662.5 1500.0,671.9 1500.5,680.6 1501.1,696.4 1501.6,686.2 1502.1,683.1 1502.6,693.9 1503.2,687.2 1503.7,688.3 1504.2,688.3 1504.7,693.2 1505.3,696.5 1505.8,698.5 1506.3,694.0 1506.8,693.6 1507.4,703.2 1507.9,695.8 1508.4,709.5 1508.9,696.6 1509.4,711.0 1510.0,693.4 1510.5,706.5 1511.0,700.5 1511.5,698.1 1512.1,716.0 1512.6,695.7 1513.1,705.6 1513.6,714.6 1514.2,698.0 1514.7,710.4 1515.2,722.2 1515.7,700.5 1516.3,705.9 1516.8,703.0 1517.3,705.6 1517.8,695.7 1518.4,698.6 1518.9,705.2 1519.4,699.1 1519.9,705.9 1520.5,718.1 1521.0,702.7 1521.5,703.7 1522.0,703.4 1522.5,714.8 1523.1,705.2 1523.6,703.9 1524.1,703.0 1524.6,718.4 1525.2,715.9 1525.7,706.2 1526.2,710.6 1526.7,704.4 1527.3,713.5 1527.8,713.4 1528.3,706.1 1528.8,709.3 1529.4,720.6 1529.9,720.8 1530.4,724.8 1530.9,730.7 1531.5,706.0 1532.0,705.2 1532.5,699.4 1533.0,722.9 1533.6,722.1 1534.1,704.4 1534.6,720.2 1535.1,704.7 1535.7,708.2 1536.2,732.8 1536.7,710.1 1537.2,706.3 1537.7,706.7 1538.3,707.6 1538.8,707.0 1539.3,700.2 1539.8,714.5 1540.4,711.4 1540.9,725.9 1541.4,720.3 1541.9,708.1 1542.5,730.8 1543.0,713.1 1543.5,732.5 1544.0,718.9 1544.6,716.6 1545.1,727.3 1545.6,720.7 1546.1,711.1 1546.7,726.3 1547.2,712.0 1547.7,706.7 1548.2,704.1 1548.8,723.6 1549.3,715.7 1549.8,707.4 1550.3,704.7 1550.8,718.6 1551.4,703.1 1551.9,707.8 1552.4,712.2 1552.9,727.4 1553.5,838.2 1554.0,829.4 1554.5,704.5 1555.0,714.8 1555.6,713.7 1556.1,709.3 1556.6,712.2 1557.1,710.8 1557.7,702.2 1558.2,702.6 1558.7,706.4 1559.2,709.1 1559.8,705.0 1560.3,722.6 1560.8,715.3 1561.3,724.2 1561.9,711.9 1562.4,720.0 1562.9,731.0 1563.4,740.2 1563.9,735.6 1564.5,723.3 1565.0,720.5 1565.5,741.7 1566.0,727.0 1566.6,749.9 1567.1,742.6 1567.6,750.7 1568.1,743.7 1568.7,749.7 1569.2,750.3 1569.7,755.1 1570.2,751.3 1570.8,781.3 1571.3,774.1 1571.8,763.7 1572.3,753.2 1572.9,783.7 1573.4,770.4 1573.9,778.3 1574.4,761.2 1575.0,772.2 1575.5,770.2 1576.0,783.3 1576.5,772.9 1577.0,781.5 1577.6,768.2 1578.1,787.4 1578.6,786.0 1579.1,765.5 1579.7,776.0 1580.2,780.7 1580.7,808.6 1581.2,780.2 1581.8,795.5 1582.3,781.3 1582.8,780.4 1583.3,783.6 1583.9,790.3 1584.4,813.2 1584.9,786.4 1585.4,758.1 1586.0,769.8 1586.5,765.1 1587.0,815.7 1587.5,794.8 1588.1,770.4 1588.6,783.6 1589.1,808.7 1589.6,803.5 1590.1,781.5 1590.7,879.2 1591.2,872.3 1591.7,782.3 1592.2,806.4 1592.8,791.8 1593.3,774.7 1593.8,809.4 1594.3,809.8 1594.9,825.1 1595.4,789.4 1595.9,795.1 1596.4,790.3 1597.0,784.1 1597.5,826.6 1598.0,800.0 1598.5,802.2 1599.1,847.8 1599.6,843.7 1600.1,815.5 1600.6,798.9 1601.2,798.9 1601.7,782.9 1602.2,841.6 1602.7,784.2 1603.2,788.9 1603.8,806.9 1604.3,804.3 1604.8,813.7 1605.3,791.9 1605.9,789.5 1606.4,770.8 1606.9,821.5 1607.4,803.1 1608.0,796.1 1608.5,817.9 1609.0,788.5 1609.5,788.4 1610.1,799.5 1610.6,814.4 1611.1,813.8 1611.6,833.7 1612.2,830.3 1612.7,828.5 1613.2,847.4 1613.7,820.4 1614.3,779.4 1614.8,826.5 1615.3,785.7 1615.8,793.7 1616.3,845.2 1616.9,816.3 1617.4,806.1 1617.9,815.2 1618.4,792.5 1619.0,840.8 1619.5,770.0 1620.0,801.9 1620.5,843.0 1621.1,870.5 1621.6,855.2 1622.1,854.3 1622.6,787.7 1623.2,814.4 1623.7,836.8 1624.2,840.1 1624.7,970.2 1625.3,957.6 1625.8,839.2 1626.3,867.8 1626.8,790.1 1627.4,791.7 1627.9,805.2 1628.4,826.1 1628.9,792.5 1629.4,801.8 1630.0,837.9 1630.5,780.3 1631.0,787.6 1631.5,771.7 1632.1,789.1 1632.6,808.1 1633.1,790.0 1633.6,790.4 1634.2,792.4 1634.7,807.2 1635.2,782.1 1635.7,806.4 1636.3,811.2 1636.8,792.3 1637.3,788.6 1637.8,783.3 1638.4,808.2 1638.9,775.3 1639.4,792.9 1639.9,823.6 1640.5,785.2 1641.0,812.7 1641.5,784.7 1642.0,817.9 1642.6,798.5 1643.1,804.1 1643.6,781.9 1644.1,800.0 1644.6,783.3 1645.2,816.6 1645.7,784.6 1646.2,783.3 1646.7,786.4 1647.3,828.7 1647.8,816.8 1648.3,798.9 1648.8,822.6 1649.4,805.5 1649.9,804.2 1650.4,766.5 1650.9,787.1 1651.5,823.0 1652.0,808.5 1652.5,812.5 1653.0,816.1 1653.6,810.6 1654.1,795.4 1654.6,808.1 1655.1,809.8 1655.7,814.1 1656.2,762.6 1656.7,801.7 1657.2,803.6 1657.7,768.8 1658.3,769.8 1658.8,804.4 1659.3,846.2 1659.8,842.7 1660.4,789.9 1660.9,797.1 1661.4,761.5 1661.9,796.8 1662.5,784.2 1663.0,811.6 1663.5,756.3 1664.0,775.2 1664.6,776.8 1665.1,766.4 1665.6,793.9 1666.1,749.7 1666.7,786.6 1667.2,784.4 1667.7,763.0 1668.2,760.6 1668.8,765.2 1669.3,795.7 1669.8,766.4 1670.3,780.9 1670.8,772.4 1671.4,795.0 1671.9,796.2 1672.4,789.4 1672.9,798.2 1673.5,793.9 1674.0,788.1 1674.5,753.9 1675.0,789.9 1675.6,770.9 1676.1,790.9 1676.6,760.7 1677.1,773.0 1677.7,769.9 1678.2,779.9 1678.7,775.6 1679.2,790.5 1679.8,769.6 1680.3,759.7 1680.8,781.2 1681.3,772.3 1681.9,789.1 1682.4,796.9 1682.9,761.7 1683.4,789.9 1683.9,779.4 1684.5,762.1 1685.0,788.2 1685.5,771.8 1686.0,773.3 1686.6,779.2 1687.1,789.5 1687.6,792.0 1688.1,805.7 1688.7,795.2 1689.2,775.5 1689.7,803.8 1690.2,784.7 1690.8,792.9 1691.3,779.2 1691.8,779.7 1692.3,775.6 1692.9,789.5 1693.4,819.9 1693.9,786.9 1694.4,782.0 1695.0,762.0 1695.5,792.6 1696.0,827.0 1696.5,783.4 1697.0,797.5 1697.6,809.7 1698.1,866.2 1698.6,863.0 1699.1,807.1 1699.7,821.4 1700.2,795.2 1700.7,806.6 1701.2,814.0 1701.8,860.6 1702.3,809.9 1702.8,838.0 1703.3,855.5 1703.9,824.5 1704.4,799.9 1704.9,780.5 1705.4,817.1 1706.0,816.6 1706.5,827.7 1707.0,841.2 1707.5,795.9 1708.1,831.1 1708.6,785.6 1709.1,810.3 1709.6,821.2 1710.1,782.5 1710.7,778.5 1711.2,808.9 1711.7,822.2 1712.2,801.7 1712.8,792.3 1713.3,831.9 1713.8,784.4 1714.3,828.9 1714.9,840.5 1715.4,827.8 1715.9,820.4 1716.4,783.9 1717.0,824.5 1717.5,862.0 1718.0,833.6 1718.5,789.5 1719.1,782.5 1719.6,845.0 1720.1,799.4 1720.6,781.8 1721.2,860.5 1721.7,785.8 1722.2,781.7 1722.7,813.0 1723.2,781.1 1723.8,784.9 1724.3,818.1 1724.8,798.2 1725.3,791.4 1725.9,791.0 1726.4,830.4 1726.9,781.9 1727.4,782.0 1728.0,856.2 1728.5,823.2 1729.0,801.8 1729.5,813.1 1730.1,830.7 1730.6,825.7 1731.1,796.1 1731.6,782.6 1732.2,785.2 1732.7,815.4 1733.2,801.5 1733.7,787.2 1734.3,791.5 1734.8,815.9 1735.3,798.8 1735.8,812.8 1736.4,789.3 1736.9,811.4 1737.4,813.2 1737.9,821.9 1738.4,828.8 1739.0,777.2 1739.5,809.8 1740.0,786.4 1740.5,781.5 1741.1,823.4 1741.6,775.8 1742.1,788.9 1742.6,811.8 1743.2,759.6 1743.7,809.6 1744.2,821.3 1744.7,810.0 1745.3,811.3 1745.8,774.3 1746.3,793.4 1746.8,836.8 1747.4,803.8 1747.9,819.4 1748.4,804.5 1748.9,808.9 1749.5,823.5 1750.0,795.2 1750.5,765.9 1751.0,806.3 1751.5,766.1 1752.1,752.3 1752.6,795.8 1753.1,787.3 1753.6,771.7 1754.2,812.3 1754.7,765.8 1755.2,766.3 1755.7,783.8 1756.3,794.7 1756.8,831.6 1757.3,763.6 1757.8,781.6 1758.4,800.1 1758.9,796.4 1759.4,786.4 1759.9,812.3 1760.5,766.4 1761.0,817.2 1761.5,783.1 1762.0,807.5 1762.6,819.2 1763.1,816.6 1763.6,821.9 1764.1,814.0 1764.6,799.5 1765.2,855.2 1765.7,850.0 1766.2,772.7 1766.7,777.3 1767.3,802.6 1767.8,806.7 1768.3,777.6 1768.8,809.5 1769.4,783.8 1769.9,799.2 1770.4,797.6 1770.9,800.1 1771.5,819.5 1772.0,789.6 1772.5,780.6 1773.0,779.8 1773.6,808.3 1774.1,780.5 1774.6,782.6 1775.1,779.5 1775.7,797.9 1776.2,780.5 1776.7,812.9 1777.2,782.3 1777.7,790.5 1778.3,785.4 1778.8,821.1 1779.3,771.2 1779.8,809.4 1780.4,802.8 1780.9,798.9 1781.4,809.4 1781.9,813.6 1782.5,822.0 1783.0,835.2 1783.5,820.4 1784.0,822.3 1784.6,826.6 1785.1,817.5 1785.6,801.2 1786.1,783.4 1786.7,834.9 1787.2,834.0 1787.7,830.5 1788.2,827.4 1788.8,803.0 1789.3,793.9 1789.8,839.1 1790.3,808.9 1790.8,835.3 1791.4,837.8 1791.9,799.4 1792.4,811.0 1792.9,814.8 1793.5,855.1 1794.0,826.4 1794.5,827.4 1795.0,819.8 1795.6,882.2 1796.1,876.7 1796.6,814.3 1797.1,800.8 1797.7,842.2 1798.2,809.8 1798.7,841.3 1799.2,845.7 1799.8,815.5 1800.3,805.0 1800.8,814.5 1801.3,862.4 1801.9,838.3 1802.4,839.3 1802.9,867.1 1803.4,808.0 1803.9,798.6 1804.5,883.8 1805.0,879.3 1805.5,793.3 1806.0,825.4 1806.6,826.1 1807.1,806.2 1807.6,817.5 1808.1,801.1 1808.7,808.8 1809.2,839.6 1809.7,852.8 1810.2,842.3 1810.8,826.4 1811.3,825.0 1811.8,791.4 1812.3,807.3 1812.9,817.6 1813.4,857.8 1813.9,796.4 1814.4,864.2 1815.0,859.6 1815.5,803.3 1816.0,779.4 1816.5,835.3 1817.0,811.4 1817.6,803.4 1818.1,803.5 1818.6,812.0 1819.1,818.7 1819.7,796.3 1820.2,842.6 1820.7,795.1 1821.2,798.7 1821.8,776.7 1822.3,818.4 1822.8,803.6 1823.3,858.2 1823.9,816.6 1824.4,776.8 1824.9,833.2 1825.4,841.1 1826.0,789.3 1826.5,818.1 1827.0,797.4 1827.5,775.4 1828.1,842.8 1828.6,778.2 1829.1,803.9 1829.6,824.5 1830.2,792.5 1830.7,812.5 1831.2,868.2 1831.7,867.2 1832.2,827.1 1832.8,797.0 1833.3,817.7 1833.8,792.0 1834.3,837.4 1834.9,831.2 1835.4,833.3 1835.9,794.9 1836.4,771.9 1837.0,786.1 1837.5,790.1 1838.0,821.1 1838.5,831.2 1839.1,850.5 1839.6,794.6 1840.1,809.3 1840.6,809.1 1841.2,816.9 1841.7,829.9 1842.2,840.7 1842.7,798.6 1843.3,804.1 1843.8,806.0 1844.3,791.7 1844.8,798.3 1845.3,792.3 1845.9,804.5 1846.4,822.1 1846.9,799.9 1847.4,799.8 1848.0,801.9 1848.5,823.2 1849.0,884.5 1849.5,879.0 1850.1,820.8 1850.6,847.8 1851.1,845.6 1851.6,808.2 1852.2,873.0 1852.7,859.5 1853.2,807.2 1853.7,844.2 1854.3,820.8 1854.8,839.0 1855.3,774.2 1855.8,827.8 1856.4,837.3 1856.9,848.6 1857.4,789.5 1857.9,819.6 1858.4,827.7 1859.0,796.4 1859.5,814.7 1860.0,785.5 1860.5,821.6 1861.1,825.3 1861.6,783.9 1862.1,826.2 1862.6,824.3 1863.2,847.2 1863.7,797.6 1864.2,847.4 1864.7,809.4 1865.3,843.5 1865.8,832.0 1866.3,827.3 1866.8,794.2 1867.4,799.4 1867.9,790.6 1868.4,811.7 1868.9,793.4 1869.5,847.9 1870.0,809.7 1870.5,815.0"/><path d="M1349.0 163.0l-4 -7h8z" fill="#ff0000"/><text x="1349.5" y="152.7" text-anchor="middle" font-size="15.5" fill="#b8161a">1</text><path d="M1288.0 186.0l-4 -7h8z" fill="#00ff2a"/><text x="1288.5" y="175.7" text-anchor="middle" font-size="15.5" fill="#2ee05a">2</text><path d="M1410.0 186.0l-4 -7h8z" fill="#0000ff"/><text x="1410.5" y="175.7" text-anchor="middle" font-size="15.5" fill="#2222c8">3</text><path d="M812.5 573.3l-4 -7h8z" fill="#00ffff"/><text x="813.0" y="563.0" text-anchor="middle" font-size="15.5" fill="#38e4f4">4</text></svg>
<div class="t" style="left:785.3px;top:72.2px;">S21 Gain (dB)</div>
<div class="t n" style="left:785.3px;top:90.9px;">0</div>
<div class="t n" style="left:785.3px;top:266.7px;">-20</div>
<div class="t n" style="left:785.3px;top:442.5px;">-40</div>
<div class="t n" style="left:785.3px;top:618.4px;">-60</div>
<div class="t n" style="left:785.3px;top:794.2px;">-80</div>
<div class="t n" style="left:785.7px;top:966.0px;">-100</div>
<div class="t n" style="left:792.2px;top:980.9px;">453.0k</div>
<div class="t n" style="left:898.0px;top:980.9px;">453.4k</div>
<div class="t n" style="left:1003.8px;top:980.9px;">453.8k</div>
<div class="t n" style="left:1109.6px;top:980.9px;">454.2k</div>
<div class="t n" style="left:1215.4px;top:980.9px;">454.6k</div>
<div class="t n" style="left:1321.2px;top:980.9px;">455.0k</div>
<div class="t n" style="left:1427.0px;top:980.9px;">455.4k</div>
<div class="t n" style="left:1532.8px;top:980.9px;">455.8k</div>
<div class="t n" style="left:1638.6px;top:980.9px;">456.2k</div>
<div class="t n" style="left:1744.4px;top:980.9px;">456.6k</div>
<div class="" style="left:1845.5px;top:983px;width:44.5px;height:18px;overflow:hidden;"><div class="t n" style="left:4.7px;top:-2.1px;">457.0k</div>
</div>
<div style="left:125px;top:602px;width:642px;height:440px;background:#f0f0f0;border:1px solid #6b6b6b;box-shadow:5px 2px 11px 2px rgba(0,0,0,.22);overflow:hidden;"><div class="" style="left:0px;top:0px;width:640px;height:37px;background:#fff;"></div>
<svg style="left:9.4px;top:10.3px" width="19" height="15" viewBox="0 0 19 15"><defs><linearGradient id="ig9" x1="0" y1="0" x2="0" y2="1"><stop offset="0" stop-color="#2d6f86"/><stop offset="1" stop-color="#4f9a62"/></linearGradient></defs><rect x="0.5" y="0.5" width="18" height="14" fill="#eef2f2" stroke="#8a9797"/><rect x="2" y="3" width="8" height="10" fill="url(#ig9)"/><rect x="11" y="3" width="5" height="10" fill="#e3eaea"/><rect x="16" y="3" width="1" height="6" fill="#6d8584"/></svg>
<div class="t seg" style="left:34.5px;top:8.3px;font-size:15.0px;letter-spacing:-0.43px;">Sweep analysis</div>
<svg style="left:487px;top:11.5px" width="140" height="20" viewBox="0 0 140 20" fill="none" stroke="#000" stroke-width="1"><path d="M0 6.5H12.5"/><rect x="58.5" y="0.5" width="11" height="11"/><path d="M117 0L129 12M129 0L117 12"/></svg>
<div class="" style="left:13px;top:50px;width:614px;height:400px;border:1px solid #828282;"></div>
<div class="" style="left:25px;top:51px;width:1px;height:400px;background:#dadada;"></div>
<div class="" style="left:600px;top:51px;width:1px;height:400px;background:#f8f8f8;"></div>
<div class="" style="left:605px;top:51px;width:1px;height:400px;background:#f8f8f8;"></div>
<svg style="left:610px;top:58px" width="12" height="8" viewBox="0 0 12 8" fill="none" stroke="#555" stroke-width="2"><path d="M1.5 6.5L6 2L10.5 6.5"/></svg>
<div class="" style="left:606px;top:207px;width:19px;height:198px;background:#cdcdcd;"></div>
<div class="t" style="left:37.0px;top:85.2px;">Center frequency:</div>
<div class="t n" style="left:186.3px;top:85.2px;">455.049kHz</div>
<div class="t" style="left:37.0px;top:113.2px;">Bandwidth (-3 dB):</div>
<div class="t n" style="left:186.3px;top:113.2px;">466.000Hz</div>
<div class="t" style="left:37.0px;top:141.2px;">Quality factor:</div>
<div class="t n" style="left:186.3px;top:141.2px;">976.50</div>
<div class="t" style="left:37.0px;top:169.2px;">Bandwidth (-6 dB):</div>
<div class="t n" style="left:186.3px;top:169.2px;">584.000Hz</div>
<div class="t" style="left:37.0px;top:225.2px;">Lower side:</div>
<div class="t" style="left:37.0px;top:253.2px;">Cutoff frequency:</div>
<div class="t n" style="left:186.3px;top:253.2px;">454.816kHz (-9.7 dB)</div>
<div class="t" style="left:37.0px;top:281.2px;">-6 dB point:</div>
<div class="t n" style="left:186.3px;top:281.2px;">454.728kHz (-12.7 dB)</div>
<div class="t" style="left:37.0px;top:309.2px;">-60 dB point:</div>
<div class="t n" style="left:186.3px;top:309.2px;">453.702kHz (-67.0 dB)</div>
<div class="t" style="left:37.0px;top:337.2px;">Roll-off:</div>
<div class="t n" style="left:186.3px;top:337.2px;">60330.327dB/octave</div>
<div class="t" style="left:37.0px;top:365.2px;">Roll-off:</div>
<div class="t n" style="left:186.3px;top:365.2px;">200413.007dB/decade</div>
</div>
</body>
</html>
